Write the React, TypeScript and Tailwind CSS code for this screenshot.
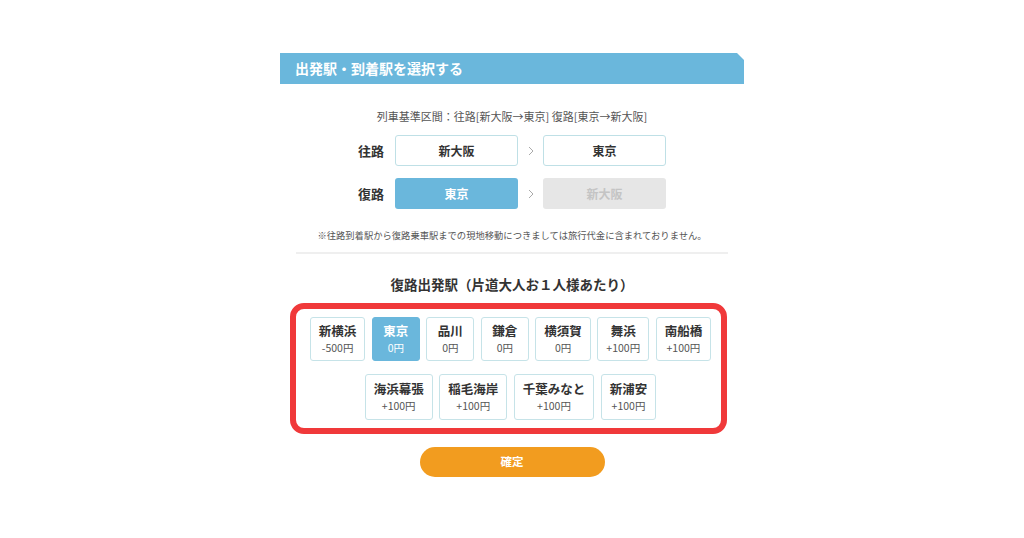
import React from "react";

const font = { fontFamily: '"Noto Sans CJK JP", "Noto Sans", sans-serif' };

const row1 = [
  { name: "新横浜", price: "-500円" },
  { name: "東京", price: "0円", active: true },
  { name: "品川", price: "0円" },
  { name: "鎌倉", price: "0円" },
  { name: "横須賀", price: "0円" },
  { name: "舞浜", price: "+100円" },
  { name: "南船橋", price: "+100円" },
];
const row2 = [
  { name: "海浜幕張", price: "+100円" },
  { name: "稲毛海岸", price: "+100円" },
  { name: "千葉みなと", price: "+100円" },
  { name: "新浦安", price: "+100円" },
];

function Station({ name, price, active, tall }: { name: string; price: string; active?: boolean; tall?: boolean }) {
  return (
    <div
      className={
        "flex min-w-[48px] flex-col items-center justify-center rounded-[3px] border px-[8px] " +
        (tall ? "h-[46px] " : "h-[44px] ") +
        (active ? "border-[#6ab7dc] bg-[#6ab7dc] text-white" : "border-[#c6e3e8] bg-white")
      }
    >
      <div className={"text-[12.5px] font-bold leading-[18px] " + (active ? "text-white" : "text-[#333]")}>{name}</div>
      <div className={"text-[10.5px] leading-[16px] " + (active ? "text-white" : "text-[#555]")}>{price}</div>
    </div>
  );
}

function Chevron() {
  return (
    <div className="flex w-[25px] items-center justify-center">
      <svg width="6" height="10" viewBox="0 0 6 10" fill="none">
        <path d="M1 1l4 4-4 4" stroke="#aaa" strokeWidth="1" />
      </svg>
    </div>
  );
}

export default function App() {
  return (
    <div className="min-h-[538px] w-full bg-white" style={font}>
      <div className="mx-auto w-[464px] pt-[53px]">
        <div className="flex h-[31px] items-center bg-[#6ab7dc] pl-[15px] [clip-path:polygon(0_0,calc(100%-7px)_0,100%_7px,100%_100%,0_100%)]">
          <span className="text-[14px] font-bold text-white">出発駅・到着駅を選択する</span>
        </div>

        <div className="mt-[24px] text-center text-[11px] leading-[16px] text-[#555]">
          列車基準区間：往路[新大阪→東京] 復路[東京→新大阪]
        </div>

        <div className="mt-[11px] flex flex-col items-center gap-[12px]">
          <div className="flex items-center">
            <div className="mr-[11px] w-[26px] text-[13px] font-bold text-[#333]">往路</div>
            <div className="flex h-[31px] w-[123px] items-center justify-center rounded-[3px] border border-[#bfe0e6] bg-white text-[12px] font-bold text-[#333]">
              新大阪
            </div>
            <Chevron />
            <div className="flex h-[31px] w-[123px] items-center justify-center rounded-[3px] border border-[#bfe0e6] bg-white text-[12px] font-bold text-[#333]">
              東京
            </div>
          </div>
          <div className="flex items-center">
            <div className="mr-[11px] w-[26px] text-[13px] font-bold text-[#333]">復路</div>
            <div className="flex h-[31px] w-[123px] items-center justify-center rounded-[3px] bg-[#6ab7dc] text-[12px] font-bold text-white">
              東京
            </div>
            <Chevron />
            <div className="flex h-[31px] w-[123px] items-center justify-center rounded-[3px] bg-[#e6e6e6] text-[12px] font-bold text-[#c4c4c4]">
              新大阪
            </div>
          </div>
        </div>

        <div className="mt-[19px] text-center text-[9.3px] leading-[14px] text-[#555]">
          ※往路到着駅から復路乗車駅までの現地移動につきましては旅行代金に含まれておりません。
        </div>

        <div className="mx-[16px] mt-[10px] h-[2px] bg-[#efefef]" />

        <div className="mt-[20px] text-center text-[13.5px] font-bold leading-[20px] text-[#333]">
          復路出発駅（片道大人お１人様あたり）
        </div>

        <div className="ml-[10px] mr-[17px] mt-[9px] rounded-[14px] border-[6px] border-[#f0393a] pb-[8px] pl-[10px] pr-[6px] pt-[8px]">
          <div className="flex flex-col items-center gap-[13px]">
            <div className="flex justify-center gap-[6.5px]">
              {row1.map((s) => (
                <Station key={s.name} {...s} />
              ))}
            </div>
            <div className="flex justify-center gap-[6.5px]">
              {row2.map((s) => (
                <Station key={s.name} {...s} tall />
              ))}
            </div>
          </div>
        </div>

        <div className="mt-[13px] flex justify-center">
          <div className="flex h-[30px] w-[185px] items-center justify-center rounded-full bg-[#f29c1f] text-[11.5px] font-bold text-white">
            確定
          </div>
        </div>
      </div>
    </div>
  );
}
